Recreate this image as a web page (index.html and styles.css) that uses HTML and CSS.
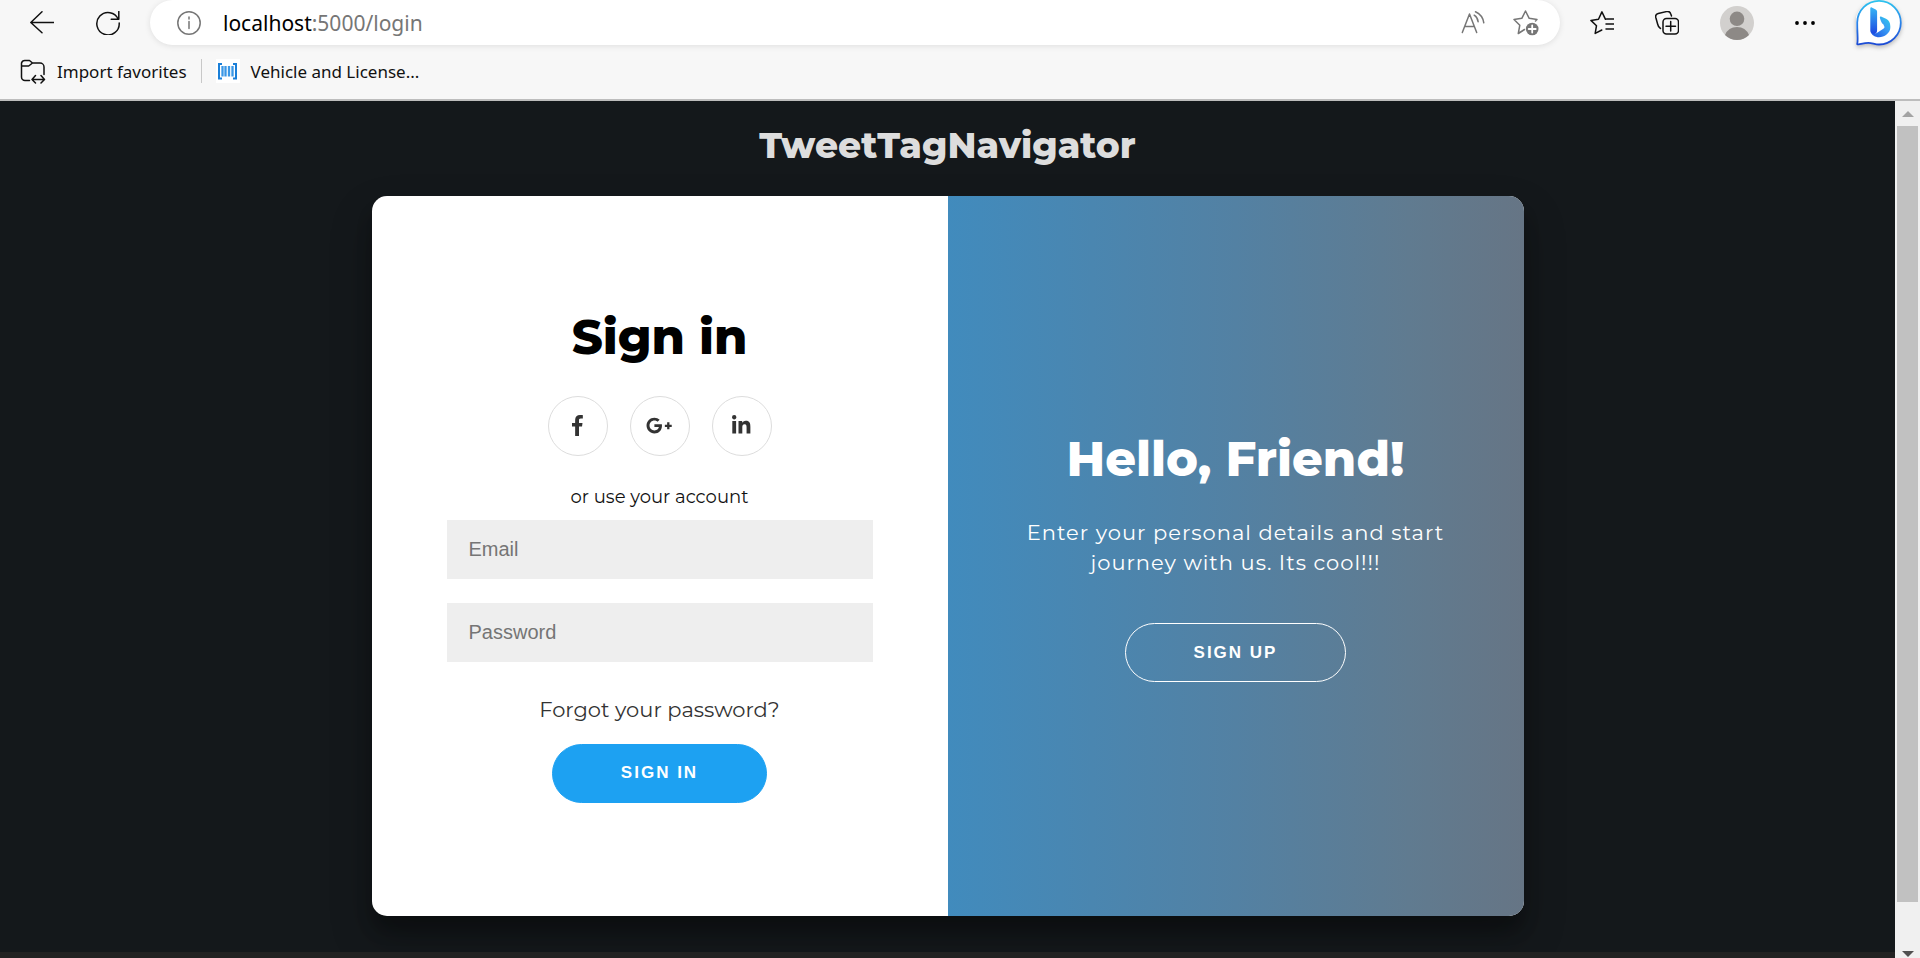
FILE: index.html
```html
<!DOCTYPE html>
<html lang="en">
<head>
<meta charset="utf-8">
<title>TweetTagNavigator</title>
<link rel="stylesheet" href="styles.css">
</head>
<body>
<header class="chrome">
  <div class="toolbar">
    <div class="nav-buttons">
      <button class="icon-button" type="button" aria-label="Back">
        <svg width="24" height="24" viewBox="0 0 24 24" class="line"><path d="M24 11.5H.8M12 .8.8 11.5 12 21.8"/></svg>
      </button>
      <button class="icon-button" type="button" aria-label="Refresh">
        <svg width="24" height="24" viewBox="0 0 24 24" class="line"><path d="M22.3 8.3A11.2 11.2 0 1 0 23.2 12M22.8.5v7.8h-7.6"/></svg>
      </button>
    </div>
    <div class="address">
      <svg width="24" height="24" viewBox="0 0 24 24" class="line muted"><circle cx="12" cy="12" r="11.2"/><path d="M12 10.500v7M12 6v2"/></svg>
      <p class="url">localhost<span class="url-path">:5000/login</span></p>
      <button class="icon-button" type="button" aria-label="Read aloud">
        <svg width="24" height="24" viewBox="0 0 24 24" class="line muted"><path d="M1.300 21.500 8.500 3l7.200 18.500M3.800 15.500h9.600M13.200 4.200c2.200 1.400 3.600 3.700 3.900 6.500M14.500.8c4.400 2 7.500 5.800 8.300 11"/></svg>
      </button>
      <button class="icon-button" type="button" aria-label="Add to favorites">
        <svg width="26" height="26" viewBox="0 0 26 26" class="line muted"><path d="M11.500 19.500 5.300 23.500l1.500-8.300L1 9.500l7.800-1.200L12.500 1l3.700 7.300 7.800 1.200-1.500 1.500"/><circle cx="19.200" cy="19" r="6.300" fill="#767676" stroke="none"/><path d="M19.200 15.500v7M15.700 19h7" stroke="#fff" stroke-width="1.800"/></svg>
      </button>
    </div>
    <div class="tool-buttons">
      <button class="icon-button" type="button" aria-label="Favorites">
        <svg width="24" height="24" viewBox="0 0 24 24" class="line"><path d="M15.500 8.300 11.900.9 8.500 8.300.9 9.400l5.600 5.300-1.300 7.700 6.600-3.400M16.500 8h7.500M16 13h8M16 18h8"/></svg>
      </button>
      <button class="icon-button" type="button" aria-label="Collections">
        <svg width="24" height="24" viewBox="0 0 24 24" class="line"><rect x="8" y="7.500" width="15.500" height="15.500" rx="3.500"/><path d="M15.700 10.500v9.500M11 15.300h9.500M5.500 17.500C3.500 16.500 3 15 2.600 13L.8 6.500C.3 4.500 1.300 3 3.200 2.500L11.500.6c2-.5 3.600.3 4.200 2.200l.8 2.200"/></svg>
      </button>
      <button class="icon-button" type="button" aria-label="Profile">
        <svg width="34" height="34" viewBox="0 0 34 34"><circle cx="17" cy="17" r="17" fill="#d2d0ce"/><circle cx="17" cy="12.800" r="7.300" fill="#8d8986"/><path d="M5 29a13 13 0 0 1 24 0A17 17 0 0 1 5 29z" fill="#8d8986"/></svg>
      </button>
      <button class="icon-button" type="button" aria-label="Settings and more">
        <svg width="20" height="24" viewBox="0 0 20 24"><circle cx="2" cy="12" r="1.900"/><circle cx="10" cy="12" r="1.900"/><circle cx="18" cy="12" r="1.900"/></svg>
      </button>
      <button class="icon-button" type="button" aria-label="Bing chat">
        <svg class="bing" width="46" height="46" viewBox="0 0 46 46">
          <defs>
            <linearGradient id="rim" x1="0" y1="0" x2="0" y2="1"><stop offset="0" stop-color="#2cc3ee"/><stop offset=".5" stop-color="#2b84ea"/><stop offset="1" stop-color="#1b4ad5"/></linearGradient>
            <linearGradient id="stem" x1="0" y1="0" x2="0" y2="1"><stop offset="0" stop-color="#37b5f5"/><stop offset="1" stop-color="#1c46e0"/></linearGradient>
            <linearGradient id="bowl" x1="0" y1="1" x2="1" y2="0"><stop offset="0" stop-color="#1c50e0"/><stop offset=".6" stop-color="#3a9df5"/><stop offset="1" stop-color="#2bd0e8"/></linearGradient>
          </defs>
          <path d="M1.200 44C3 40.500 3.200 38 2.800 34.500A21.800 21.800 0 1 1 23 44.500c-4 0-7-1.700-10.500-1.700-4 0-6.800 1-10 1.600-.8.100-1.300 0-1.300-.4z" fill="#fff"/>
          <path d="M1.200 44C2.300 41 1.200 34 1.200 22.500A21.800 21.800 0 1 1 23 44.500c-4 0-7-1.700-10.500-1.700-4 0-6.800 1-10 1.600-.8.100-1.300 0-1.300-.4z" fill="#fff" stroke="url(#rim)" stroke-width="1.800"/>
          <path d="M14.300 8.300c0-.8.700-1.200 1.400-.8l4 2c.9.500 1.400 1.200 1.400 2.200v18.500c0 2.500-1.500 4-3.500 4s-3.300-1.700-3.300-3.700z" fill="url(#stem)"/>
          <path d="M24 18.200c-.5-1.300.4-1.900 1.500-1.400l4.500 2c3 1.500 4.300 4.100 4.300 7.400v1.500c0 5.300-6 9.500-11.300 9.500-4 0-7-2.200-7.800-4.500 2.500 1.700 4 1 6 0l6.500-4.200c.8-.5.900-1.200.6-2l-1-2.300c-1.500-.8-2.500-3-3.300-6z" fill="url(#bowl)"/>
        </svg>
      </button>
    </div>
  </div>
  <nav class="bookmarks">
    <a class="bookmark" href="#">
      <svg width="26" height="26" viewBox="0 0 26 26" class="line"><path d="M9.500 22.500H5a3.500 3.500 0 0 1-3.500-3.500V5A3.500 3.500 0 0 1 5 2.500h4.500L12.500 5H20a4 4 0 0 1 4 4v7.500M1.500 8h7.200l3.800-3M12 21.500h12M15.500 17.500 12 21.500l3.500 3.500M21 17.500l3.500 4-3.500 3.500"/></svg>
      Import favorites
    </a>
    <span class="bookmark-divider"></span>
    <a class="bookmark" href="#">
      <svg width="24" height="24" viewBox="0 0 24 24"><path fill="#fff" d="M0 0h24v24H0z"/><path d="M6 5H3v14.500h3M17 5h3v14.500h-3" fill="none" stroke="#1a7fd8" stroke-width="2"/><path d="M6.500 7v10.500M9.500 7v10.500M13 7v10.500M16.500 7v10.500" stroke="#3a97e6" stroke-width="2.300"/></svg>
      Vehicle and License...
    </a>
  </nav>
</header>
<div class="viewport">
  <div class="page">
    <main class="content">
      <h2 class="site-title">TweetTagNavigator</h2>
      <div class="card">
        <form class="sign-in">
          <h1 class="heading">Sign in</h1>
          <div class="socials">
            <a class="social" href="#" aria-label="Facebook"><svg height="21" viewBox="0 0 264 512"><path d="M76.700 512V283H0v-91h76.700v-71.700C76.700 42.400 124.300 0 193.800 0c33.300 0 61.900 2.500 70.200 3.600V85h-48.200c-37.800 0-45.100 18-45.100 44.300V192H256l-11.700 91h-73.600v229"/></svg></a>
            <a class="social" href="#" aria-label="Google Plus"><svg height="21" viewBox="0 0 640 512"><path d="M386.061 228.496c1.834 9.692 3.143 19.384 3.143 31.956C389.204 370.205 315.599 448 204.800 448c-106.084 0-192-85.915-192-192s85.916-192 192-192c51.864 0 95.083 18.859 128.611 50.292l-52.126 50.030c-14.145-13.621-39.028-29.599-76.485-29.599-65.484 0-118.920 54.221-118.920 121.277 0 67.056 53.436 121.277 118.920 121.277 75.961 0 104.513-54.745 108.965-82.773H204.800v-66.009h181.261zm185.406 6.437V179.200h-56.001v55.733h-55.733v56.001h55.733v55.733h56.001v-55.733H627.200v-56.001h-55.733z"/></svg></a>
            <a class="social" href="#" aria-label="LinkedIn"><svg height="21" viewBox="0 0 448 512"><path d="M100.280 448H7.400V148.900h92.880zM53.790 108.100C24.090 108.100 0 83.500 0 53.800a53.790 53.790 0 0 1 107.580 0c0 29.700-24.100 54.300-53.790 54.300zM447.900 448h-92.680V302.400c0-34.700-.7-79.200-48.290-79.200-48.290 0-55.690 37.700-55.690 76.700V448h-92.780V148.900h89.080v40.800h1.300c12.400-23.500 42.690-48.300 87.880-48.300 94 0 111.280 61.900 111.280 142.300V448z"/></svg></a>
          </div>
          <p class="hint">or use your account</p>
          <input class="field" type="email" placeholder="Email" aria-label="Email">
          <input class="field" type="password" placeholder="Password" aria-label="Password">
          <a class="forgot" href="#">Forgot your password?</a>
          <button class="button" type="button">SIGN IN</button>
        </form>
        <section class="welcome">
          <h1 class="heading">Hello, Friend!</h1>
          <p class="pitch">Enter your personal details and start journey with us. Its cool!!!</p>
          <button class="button ghost" type="button">SIGN UP</button>
        </section>
      </div>
    </main>
    <footer class="footer"></footer>
  </div>
  <div class="scrollbar">
    <svg width="12" height="6" viewBox="0 0 12 6"><path fill="#a3a3a3" d="M0 6 6 0l6 6z"/></svg>
    <div class="thumb"></div>
    <svg width="12" height="6" viewBox="0 0 12 6"><path fill="#505050" d="M0 0h12L6 6z"/></svg>
  </div>
</div>
</body>
</html>
```
FILE: styles.css
```css
* {
  box-sizing: border-box;
}

body {
  margin: 0;
  height: 100vh;
  display: flex;
  flex-direction: column;
  overflow: hidden;
  font-family: Montserrat, Inter, sans-serif;
}

h1, h2, p {
  margin: 0;
}

svg {
  display: block;
  flex: none;
}

a {
  text-decoration: none;
}

.line {
  fill: none;
  stroke: #111;
  stroke-width: 1.5;
  stroke-linecap: round;
  stroke-linejoin: round;
}

.muted {
  stroke: #767676;
}

/* Browser chrome */
.chrome {
  flex: none;
  background: #f7f7f7;
  border-bottom: 2px solid #bdbdbd;
  font-family: "Segoe UI", "Noto Sans", sans-serif;
}

.toolbar {
  display: flex;
  align-items: center;
  gap: 30px;
  height: 45px;
  padding: 0 18px 0 30px;
}

.nav-buttons {
  display: flex;
  gap: 42px;
}

.tool-buttons {
  display: flex;
  align-items: center;
  gap: 41px;
}

.icon-button {
  border: 0;
  padding: 0;
  background: none;
}

.bing {
  filter: drop-shadow(0 2px 2px rgba(0, 0, 0, 0.25));
}

.address {
  flex: 1;
  display: flex;
  align-items: center;
  gap: 28px;
  height: 45px;
  padding: 0 21px 0 27px;
  border-radius: 23px;
  background: #fff;
  box-shadow: 0 1px 6px rgba(0, 0, 0, 0.1);
}

.url {
  flex: 1;
  margin-left: -6px;
  font-size: 21px;
  line-height: 28px;
  color: #000;
}

.url-path {
  color: #767676;
}

.bookmarks {
  display: flex;
  align-items: center;
  gap: 14px;
  height: 54px;
  padding: 0 20px 2px;
}

.bookmark {
  display: flex;
  align-items: center;
  gap: 11px;
  font-size: 17px;
  color: #111;
}

.bookmark-divider {
  width: 1px;
  height: 24px;
  background: #c8c8c8;
}

/* Page area */
.viewport {
  flex: 1;
  display: flex;
  min-height: 0;
}

.page {
  flex: 1;
  display: flex;
  flex-direction: column;
  background: #14181b;
}

.content {
  flex: 1;
  display: flex;
  flex-direction: column;
  align-items: center;
  padding-top: 20px;
}

.site-title {
  margin-bottom: 27px;
  font-size: 36px;
  font-weight: 800;
  line-height: 48px;
  color: #ddd;
}

.footer {
  height: 6px;
  background: #222;
}

.card {
  display: grid;
  grid-template-columns: 1fr 1fr;
  width: 100%;
  max-width: 1152px;
  min-height: 720px;
  border-radius: 15px;
  overflow: hidden;
  background: #fff;
  box-shadow: 0 21px 42px rgba(0, 0, 0, 0.25), 0 15px 15px rgba(0, 0, 0, 0.22);
}

.sign-in {
  display: flex;
  flex-direction: column;
  align-items: center;
  justify-content: center;
  padding: 0 75px 3px;
}

.heading {
  font-size: 48px;
  font-weight: 800;
  line-height: 60px;
}

.socials {
  display: flex;
  gap: 22px;
  margin: 29px 0 30px;
}

.social {
  display: flex;
  align-items: center;
  justify-content: center;
  width: 60px;
  height: 60px;
  border: 1px solid #ddd;
  border-radius: 50%;
  fill: #333;
}

.hint {
  margin-bottom: 12px;
  font-size: 18px;
  line-height: 22px;
  color: #111;
}

.field {
  width: 100%;
  height: 59px;
  margin-bottom: 24px;
  padding: 0 22px;
  border: 0;
  background: #eee;
  font: 20px "Liberation Sans", Arial, sans-serif;
}

.field::placeholder {
  color: #757575;
}

.forgot {
  margin: 10px 0 20px;
  font-size: 21px;
  line-height: 28px;
  color: #333;
}

.button {
  height: 59px;
  padding: 0 68px;
  border: 1px solid #1da1f2;
  border-radius: 30px;
  background: #1da1f2;
  color: #fff;
  font: bold 17px "Liberation Sans", Arial, sans-serif;
  letter-spacing: 2px;
}

.ghost {
  border-color: #fff;
  background: transparent;
}

.welcome {
  display: flex;
  flex-direction: column;
  align-items: center;
  justify-content: center;
  padding: 0 60px 1px;
  background: linear-gradient(90deg, #418bbd 0%, #5381a3 50%, #607b90 80%, #667585 100%);
  color: #fff;
  text-align: center;
}

.pitch {
  margin: 29px 0 45px;
  font-size: 21px;
  line-height: 30px;
  letter-spacing: 1px;
}

/* Scrollbar */
.scrollbar {
  display: flex;
  flex-direction: column;
  align-items: center;
  width: 25px;
  padding: 10px 2px 1px;
  background: #f0f0f0;
}

.thumb {
  flex: 1;
  align-self: stretch;
  margin: 9px 0 49px;
  background: #c1c1c1;
}
```
